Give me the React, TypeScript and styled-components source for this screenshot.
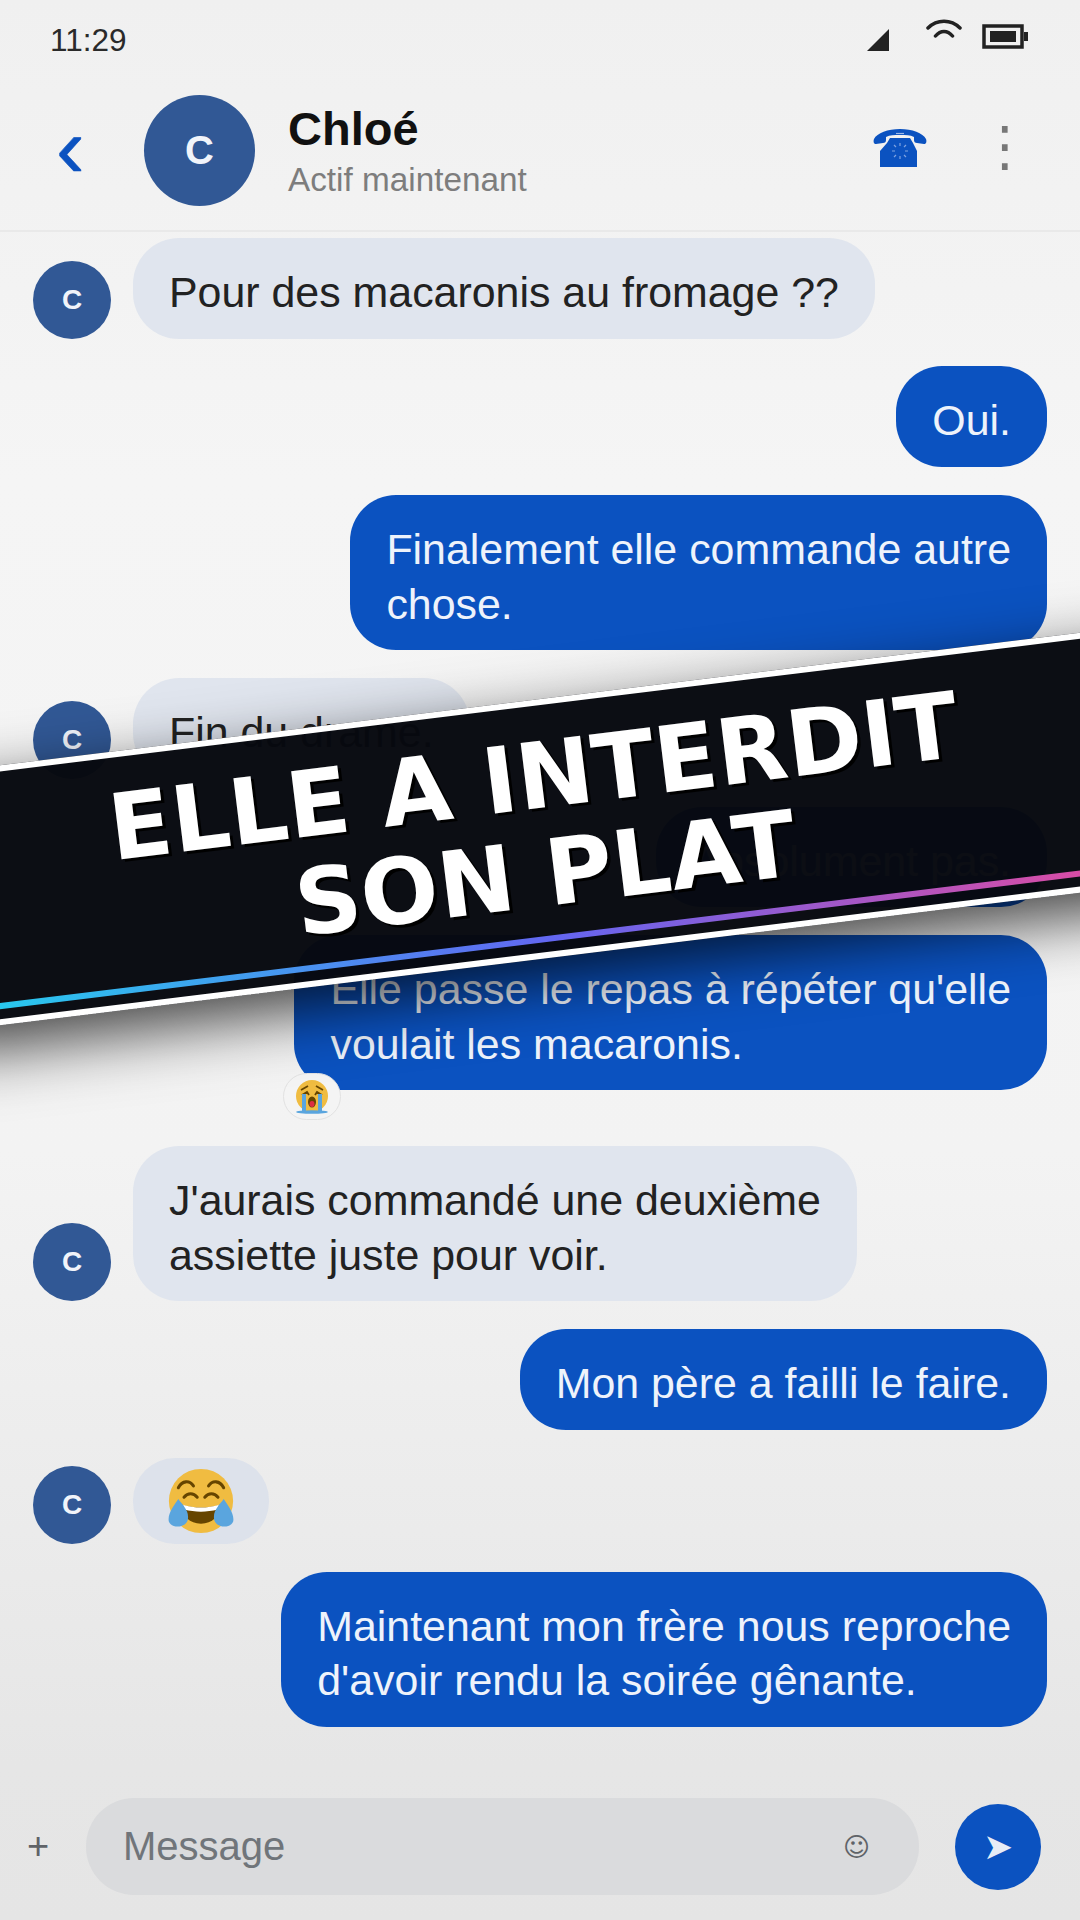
import styled, { createGlobalStyle } from "styled-components";

const GlobalStyle = createGlobalStyle`
  html, body {
    margin: 0;
    padding: 0;
  }
  body {
    font-family: "Liberation Sans", Arial, sans-serif;
  }
`;

const Screen = styled.div`
  position: relative;
  width: 1080px;
  height: 1920px;
  overflow: hidden;
  display: flex;
  flex-direction: column;
  background: linear-gradient(180deg, #f0f0f0 0%, #f5f5f5 25%, #f3f3f3 60%, #e6e6e6 92%, #e5e5e5 100%);
`;

const StatusBar = styled.div`
  height: 80px;
  display: flex;
  align-items: center;
  justify-content: space-between;
  padding: 0 52px 0 50px;
  color: #2a2a2a;
  font-size: 31.5px;
`;

const StatusIcons = styled.div`
  display: flex;
  align-items: center;
`;

const StatusIcon = styled.svg<{ $left: number; $lift: number }>`
  display: block;
  margin-left: ${({ $left }) => $left}px;
  margin-bottom: ${({ $lift }) => $lift}px;
`;

const Header = styled.header`
  height: 152px;
  display: flex;
  align-items: center;
  padding: 0 27px 10px 56px;
  border-bottom: 2px solid #e9e9e9;
  box-sizing: border-box;
`;

const Back = styled.span`
  color: #0b52c0;
  font-size: 86px;
  font-weight: 400;
  line-height: 1;
  width: 88px;
  margin-top: -6px;
  -webkit-text-stroke: 0.6px #0b52c0;
`;

const Avatar = styled.div<{ $size: number; $font: number }>`
  flex: none;
  width: ${({ $size }) => $size}px;
  height: ${({ $size }) => $size}px;
  border-radius: 50%;
  background: #315895;
  color: #f1f4fa;
  font-size: ${({ $font }) => $font}px;
  font-weight: 700;
  display: flex;
  align-items: center;
  justify-content: center;
`;

const Who = styled.div`
  flex: 1;
  margin-left: 33px;
  display: flex;
  flex-direction: column;
  gap: 4px;
  padding-top: 2px;
`;

const Name = styled.div`
  color: #111;
  font-size: 47px;
  font-weight: 700;
  line-height: 54px;
`;

const Presence = styled.div`
  color: #7d7d7d;
  font-size: 33.3px;
  line-height: 40px;
`;

const PhoneIcon = styled.svg`
  display: block;
  margin-bottom: 4px;
`;

const Dots = styled.span`
  font-family: "DejaVu Sans", sans-serif;
  color: #777;
  font-size: 55px;
  width: 96px;
  margin: 0 0 8px 30px;
  text-align: center;
  line-height: 1;
`;

const Thread = styled.main`
  flex: 1;
  display: flex;
  flex-direction: column;
  gap: 27.9px;
  padding: 6px 33px 0;
`;

const Row = styled.div<{ $mine: boolean; $extra: boolean }>`
  display: flex;
  align-items: flex-end;
  gap: 22px;
  justify-content: ${({ $mine }) => ($mine ? "flex-end" : "flex-start")};
  margin-bottom: ${({ $extra }) => ($extra ? "28px" : "0")};
`;

const Bubble = styled.div<{ $mine: boolean }>`
  position: relative;
  padding: 27px 36px 19px;
  border-radius: 46px;
  font-size: 42.9px;
  line-height: 54.6px;
  white-space: pre-line;
  background: ${({ $mine }) => ($mine ? "#0b52c0" : "#e0e5ee")};
  color: ${({ $mine }) => ($mine ? "#eef3fb" : "#222")};
`;

const EmojiBubble = styled.div`
  padding: 9px 34px;
  border-radius: 42px;
  background: #dde2eb;
  display: flex;
`;

const Reaction = styled.div`
  position: absolute;
  left: -11px;
  bottom: -30px;
  width: 58px;
  height: 47px;
  box-sizing: border-box;
  border: 1px solid #e2e2e2;
  border-radius: 24px;
  background: #f4f4f4;
  display: flex;
  align-items: center;
  justify-content: center;
`;

const Composer = styled.footer`
  display: flex;
  align-items: center;
  padding: 0 39px 25px 27px;
`;

const Plus = styled.span`
  width: 59px;
  color: #5f6368;
  font-size: 38px;
`;

const Field = styled.div`
  flex: 1;
  height: 97px;
  border-radius: 48px;
  background: #dadbdd;
  display: flex;
  align-items: center;
  justify-content: space-between;
  padding: 0 49px 0 37px;
  color: #70757a;
  font-size: 40px;
`;

const Smile = styled.span`
  font-family: "DejaVu Sans", sans-serif;
  font-size: 26px;
  color: #5f6368;
`;

const Send = styled.div`
  width: 86px;
  height: 86px;
  margin-left: 36px;
  border-radius: 50%;
  background: #0b52c0;
  color: #e8edf6;
  font-family: "DejaVu Sans", sans-serif;
  font-size: 36px;
  display: flex;
  align-items: center;
  justify-content: center;
`;

const Banner = styled.div`
  position: absolute;
  left: -80px;
  top: 700px;
  width: 1240px;
  height: 258px;
  box-sizing: border-box;
  transform: rotate(-7deg);
  background: rgba(7, 9, 15, 0.98);
  border-top: 6px solid #fff;
  border-bottom: 6px solid #fff;
  box-shadow: 0 22px 62px rgba(0, 0, 0, 0.72);
  display: flex;
  flex-direction: column;
  align-items: center;
  justify-content: center;
  padding-bottom: 7px;
  &::after {
    content: "";
    position: absolute;
    left: 0;
    right: 0;
    bottom: 10px;
    height: 6px;
    background: linear-gradient(90deg, #22d3ee 0%, #6366f1 50%, #ec4899 100%);
  }
`;

const BannerLine = styled.div`
  color: #fff;
  font-family: "DejaVu Sans", sans-serif;
  font-size: 91.5px;
  font-weight: 700;
  line-height: 98px;
  text-shadow: 3px 3px 0 #000;
`;

const PhoneGlyph = () => (
  <PhoneIcon width="54" height="38" viewBox="0 0 54 38">
    <path
      d="M27 0C15 0 4 4 1 10c-1 3 0 5 2 5l7-1c2 0 3-1 3-3V8c4-2 8-2 14-2s10 0 14 2v3c0 2 1 3 3 3l7 1c2 0 3-2 2-5C50 4 39 0 27 0z"
      fill="#0b52c0"
    />
    <path d="M17 9h20l3 5 4 8v16H7V22l7-8z" fill="#0b52c0" />
    <path
      d="M27 14v3M27 27v3M19 22h3M32 22h3M21 16l2 2M31 26l2 2M33 16l-2 2M23 26l-2 2"
      stroke="#7fa3e0"
      strokeWidth="1.200"
    />
    <path d="M23 4.500h8" stroke="#9db9e8" strokeWidth="1.200" />
  </PhoneIcon>
);

const LaughEmoji = () => (
  <svg width="68" height="68" viewBox="0 0 36 36">
    <circle cx="18" cy="18" r="17" fill="#f0bc41" />
    <path d="M6 11c2-4 6-4 8-1M22 10c2-3 6-3 8 1" fill="none" stroke="#664500" strokeWidth="1.600" strokeLinecap="round" />
    <path d="M9 16c2-2.400 5-2.400 7 0M20 16c2-2.400 5-2.400 7 0" fill="none" stroke="#664500" strokeWidth="1.600" strokeLinecap="round" />
    <path d="M8 20c6 2 14 2 20 0c0 6-4 10-10 10s-10-4-10-10z" fill="#664500" />
    <path d="M8.500 20c6 2 13 2 19 0l-.6 2.500c-6 1.500-12 1.500-17.800 0z" fill="#fff" />
    <path d="M6 17c2 3 6 6 5 11c-1 4-8 5-10 1c-1-4 3-9 5-12z" fill="#5aa5de" />
    <path d="M30 17c-2 3-6 6-5 11c1 4 8 5 10 1c1-4-3-9-5-12z" fill="#5aa5de" />
  </svg>
);

const CryEmoji = () => (
  <svg width="36" height="36" viewBox="0 0 36 36">
    <circle cx="18" cy="17" r="16" fill="#f0bc41" />
    <path d="M7 11l7-4M29 11l-7-4M8 16l5-3 2 3M28 16l-5-3-2 3" fill="none" stroke="#664500" strokeWidth="1.800" />
    <ellipse cx="18" cy="23" rx="4" ry="5.500" fill="#664500" />
    <ellipse cx="18" cy="25" rx="2.500" ry="3" fill="#dd2e44" />
    <path d="M8 15h4v17H8zM24 15h4v17h-4z" fill="#5aa5de" />
    <ellipse cx="18" cy="33" rx="16" ry="1.800" fill="#5aa5de" />
  </svg>
);

const messages = [
  { mine: false, text: "Pour des macaronis au fromage ??" },
  { mine: true, text: "Oui." },
  { mine: true, text: "Finalement elle commande autre\nchose." },
  { mine: false, text: "Fin du drame." },
  { mine: true, text: "Absolument pas." },
  { mine: true, text: "Elle passe le repas à répéter qu'elle\nvoulait les macaronis.", reaction: true },
  { mine: false, text: "J'aurais commandé une deuxième\nassiette juste pour voir." },
  { mine: true, text: "Mon père a failli le faire." },
  { mine: false, emoji: true },
  { mine: true, text: "Maintenant mon frère nous reproche\nd'avoir rendu la soirée gênante." },
];

export default function App() {
  return (
    <Screen>
      <GlobalStyle />
      <StatusBar>
        <span>11:29</span>
        <StatusIcons>
          <StatusIcon width="22" height="22" viewBox="0 0 22 22" $left={0} $lift={0}>
            <path d="M22 0v22H0z" fill="#222" />
          </StatusIcon>
          <StatusIcon width="36" height="19" viewBox="0 0 36 19" $left={37} $lift={23}>
            <path d="M2 9c9-9 23-9 32 0M9.500 17c5-6 12-6 17 0" fill="none" stroke="#222" strokeWidth="3.500" strokeLinecap="round" />
          </StatusIcon>
          <StatusIcon width="46" height="25" viewBox="0 0 46 25" $left={20} $lift={8}>
            <rect x="2" y="2" width="38" height="21" fill="none" stroke="#222" strokeWidth="3.500" />
            <rect x="8" y="7" width="26" height="11" fill="#222" />
            <rect x="42" y="8" width="4" height="9" fill="#222" />
          </StatusIcon>
        </StatusIcons>
      </StatusBar>
      <Header>
        <Back>‹</Back>
        <Avatar $size={111} $font={40}>C</Avatar>
        <Who>
          <Name>Chloé</Name>
          <Presence>Actif maintenant</Presence>
        </Who>
        <PhoneGlyph />
        <Dots>⋮</Dots>
      </Header>
      <Thread>
        {messages.map((m, i) => (
          <Row key={i} $mine={m.mine} $extra={!!m.reaction}>
            {!m.mine && <Avatar $size={78} $font={28}>C</Avatar>}
            {m.emoji ? (
              <EmojiBubble><LaughEmoji /></EmojiBubble>
            ) : (
              <Bubble $mine={m.mine}>
                {m.text}
                {m.reaction && <Reaction><CryEmoji /></Reaction>}
              </Bubble>
            )}
          </Row>
        ))}
      </Thread>
      <Composer>
        <Plus>+</Plus>
        <Field>
          <span>Message</span>
          <Smile>☺</Smile>
        </Field>
        <Send>➤</Send>
      </Composer>
      <Banner>
        <BannerLine>ELLE A INTERDIT</BannerLine>
        <BannerLine>SON PLAT</BannerLine>
      </Banner>
    </Screen>
  );
}
